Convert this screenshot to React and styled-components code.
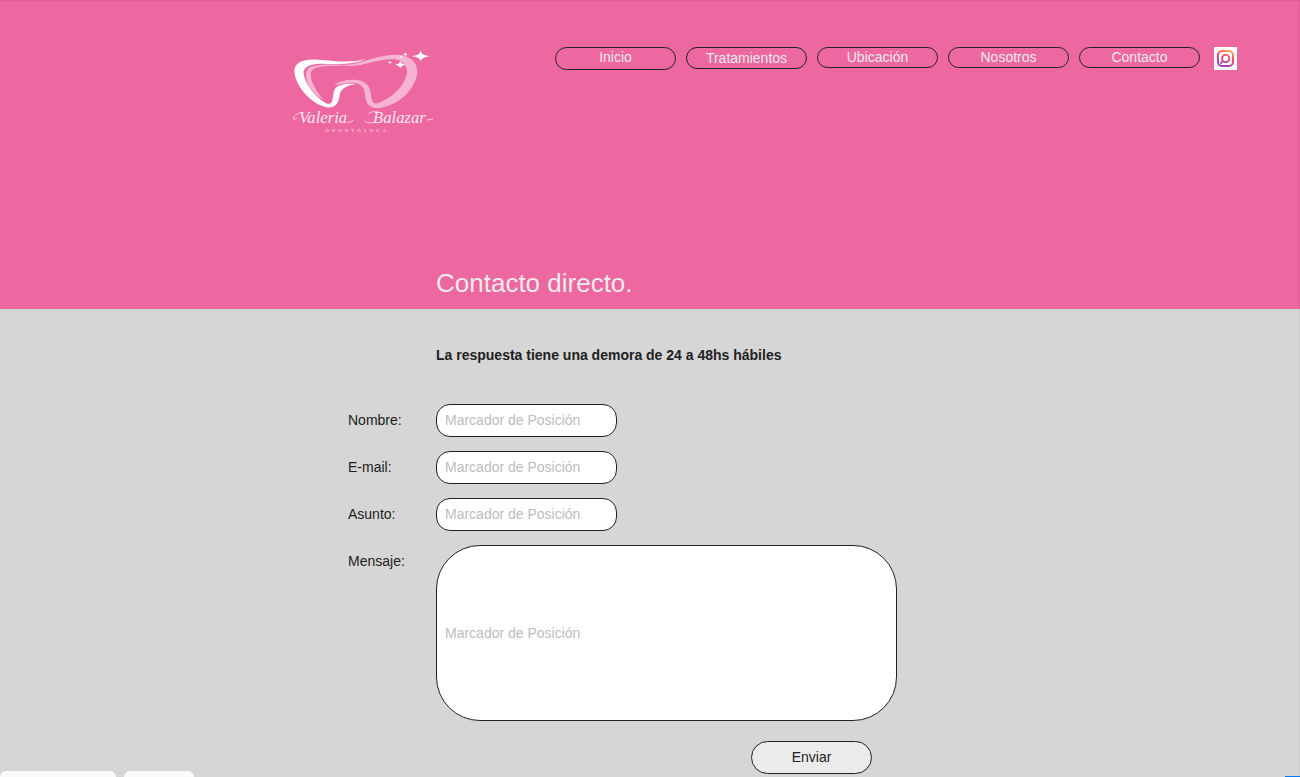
import React from "react";
import styled, { createGlobalStyle } from "styled-components";

const GlobalStyle = createGlobalStyle`
  *, *::before, *::after { box-sizing: border-box; }
  body {
    margin: 0;
    background: #d6d6d6;
    color: #212121;
    font: 14px/20px "Liberation Sans", Arial, sans-serif;
  }
`;

const Page = styled.div`
  display: flex;
  flex-direction: column;
  min-height: 100vh;
  overflow: hidden;
`;

const Hero = styled.header`
  display: flex;
  flex-direction: column;
  justify-content: space-between;
  min-height: 309px;
  padding-top: 39px;
  background: #ed67a1;
  border-top: 1px solid #e05f97;
  border-right: 1px solid #e05f97;
`;

const Main = styled.main`
  flex: 1;
  border-right: 1px solid #cacaca;
`;

const TopBar = styled.div`
  display: flex;
  justify-content: flex-end;
  align-items: flex-start;
  gap: 115px;
  padding-right: 62px;
`;

const LogoLink = styled.a`
  display: block;
  flex: none;
  line-height: 0;
`;

const Nav = styled.nav`
  display: flex;
  align-items: flex-start;
  gap: 10px;
  padding-top: 7px;
`;

const NavLink = styled.a`
  width: 121px;
  height: ${({ $height }) => $height}px;
  border: 1px solid #212121;
  border-radius: 12px;
  color: #ebebeb;
  line-height: ${({ $line }) => $line}px;
  text-align: center;
  text-decoration: none;
`;

const SocialLink = styled.a`
  display: grid;
  place-items: center;
  width: 23px;
  height: 23px;
  margin-left: 4px;
  background: #fff;
`;

const Column = styled.div`
  width: 100%;
  max-width: 1300px;
  margin: 0 auto;
  padding-left: 348px;
`;

const Title = styled.h1`
  margin: 0;
  padding: 0 0 10px 88px;
  color: #ebebeb;
  font-size: 26px;
  font-weight: 400;
  line-height: 32px;
`;

const Notice = styled.p`
  margin: 0;
  padding: 36px 0 39px 88px;
  font-weight: 700;
`;

const Form = styled.form`
  display: grid;
  gap: 14px;
  max-width: 549px;
`;

const Field = styled.div`
  display: grid;
  grid-template-columns: 88px 1fr;
  align-items: start;
`;

const Label = styled.label`
  padding-top: 6px;
`;

const Input = styled.input`
  width: 181px;
  height: 33px;
  padding: 0 8px 2px;
  border: 1px solid #212121;
  border-radius: 14px;
  background: #fff;
  color: #212121;
  font: inherit;
  &::placeholder { color: #bdbdbd; opacity: 1; }
`;

const Message = styled.textarea`
  display: block;
  width: 100%;
  height: 176px;
  padding: 77px 8px;
  border: 1px solid #212121;
  border-radius: 44px;
  background: #fff;
  color: #212121;
  font: inherit;
  resize: none;
  overflow: hidden;
  &::placeholder { color: #bdbdbd; opacity: 1; }
`;

const Submit = styled.button`
  justify-self: end;
  width: 121px;
  height: 33px;
  margin: 6px 25px 3px 0;
  padding: 0 0 2px;
  border: 1px solid #212121;
  border-radius: 17px;
  background: #ebebeb;
  color: #212121;
  font: inherit;
`;

const BottomTabs = styled.div`
  position: fixed;
  left: 0;
  bottom: 0;
  display: flex;
  gap: 8px;
`;

const BottomTab = styled.div`
  width: ${({ $width }) => $width}px;
  height: 6px;
  border-radius: 6px 6px 0 0;
  background: #fafafa;
`;

const BottomAccent = styled.div`
  position: fixed;
  right: 0;
  bottom: 0;
  width: 15px;
  height: 1px;
  background: #0a78f0;
`;

const Logo = () => (
  <svg width="155" height="100" viewBox="0 0 465 300" role="img" aria-label="Valeria Balazar">
    <g fill="#f6b3d3">
      <path d="M155 76 C210 80 270 45 332 44 C375 44 398 66 397 98 C391 143 350 191 288 203 C258 208 243 194 241 170 C239 142 229 129 202 128 C180 128 162 132 147 137 C162 124 188 118 214 120 C245 122 256 141 258 165 C260 188 267 194 283 188 C329 170 365 129 366 94 C366 70 345 57 320 57 C278 58 235 78 198 78 Z" />
      <path d="M200 75 C155 73 112 72 86 78 C58 84 58 112 74 140 C85 158 101 172 117 180 C99 161 78 131 77 105 C76 87 93 82 117 79 C145 77 172 78 200 75 Z" />
    </g>
    <g fill="#fff">
      <path d="M243 57 C202 68 161 65 112 60 C65 54 27 63 28 94 C30 136 75 190 124 202 C153 206 161 188 164 166 C167 147 181 137 212 132 C180 129 153 135 148 151 C141 169 147 192 130 192 C104 184 61 138 56 101 C53 80 78 70 110 71 C160 74 211 73 243 57 Z" />
      <path d="M407 31 Q408 47 435 49 Q409 51 407 65 Q405 51 380 49 Q405 47 407 31 Z" />
      <path d="M346 63 Q348 72 363 74 Q348 76 346 85 Q344 76 330 74 Q344 72 346 63 Z" />
      <path d="M361 37 L363 41 L368 43 L363 45 L361 49 L359 45 L354 43 L359 41 Z" />
      <path d="M315 62 L317 65 L322 67 L317 69 L315 72 L313 69 L308 67 L313 65 Z" />
      <circle cx="349" cy="52" r="3" />
    </g>
    <g fill="none" stroke="#fff" strokeWidth="2" strokeLinecap="round">
      <path d="M50 216 C40 220 27 225 25 236 Q27 241 36 234" />
      <path d="M188 247 Q198 247 205 241" />
      <path d="M251 221 C258 214 268 214 280 216" />
      <path d="M268 247 C257 250 246 249 239 244" />
      <path d="M426 240 Q435 238 443 237" />
    </g>
    <g fill="#fde6f0" fontFamily="'Liberation Serif', serif">
      <text x="42" y="249" fontSize="50" fontStyle="italic">Valeria</text>
      <text x="264" y="249" fontSize="50" fontStyle="italic">Balazar</text>
      <text x="122" y="276" fontSize="13" letterSpacing="10">ODONTÓLOGA</text>
    </g>
  </svg>
);

const InstagramIcon = () => (
  <svg width="19" height="19" viewBox="0 0 19 19" fill="none" aria-hidden="true">
    <defs>
      <linearGradient id="instagram" x1="14" y1="1" x2="7" y2="18" gradientUnits="userSpaceOnUse">
        <stop stopColor="#ffad55" />
        <stop offset="0.45" stopColor="#ef4b73" />
        <stop offset="1" stopColor="#9642c8" />
      </linearGradient>
    </defs>
    <g stroke="url(#instagram)" strokeWidth="2">
      <rect x="2" y="2" width="15" height="15" rx="4" />
      <circle cx="9.7" cy="9.4" r="3.6" />
      <path d="M7 12 L4.5 14.5" />
    </g>
  </svg>
);

const links = [
  { text: "Inicio", height: 23, line: 19 },
  { text: "Tratamientos", height: 22, line: 20 },
  { text: "Ubicación", height: 21, line: 19 },
  { text: "Nosotros", height: 21, line: 19 },
  { text: "Contacto", height: 21, line: 19 },
];

const fields = [
  { id: "nombre", label: "Nombre:", type: "text" },
  { id: "email", label: "E-mail:", type: "email" },
  { id: "asunto", label: "Asunto:", type: "text" },
];

export default function App() {
  return (
    <Page>
      <GlobalStyle />
      <Hero>
        <TopBar>
          <LogoLink href="#inicio"><Logo /></LogoLink>
          <Nav>
            {links.map(({ text, height, line }) => (
              <NavLink key={text} href={`#${text.toLowerCase()}`} $height={height} $line={line}>
                {text}
              </NavLink>
            ))}
            <SocialLink href="#instagram" aria-label="Instagram"><InstagramIcon /></SocialLink>
          </Nav>
        </TopBar>
        <Column><Title>Contacto directo.</Title></Column>
      </Hero>
      <Main>
        <Column>
          <Notice>La respuesta tiene una demora de 24 a 48hs hábiles</Notice>
          <Form onSubmit={(event) => event.preventDefault()}>
            {fields.map(({ id, label, type }) => (
              <Field key={id}>
                <Label htmlFor={id}>{label}</Label>
                <Input id={id} name={id} type={type} placeholder="Marcador de Posición" />
              </Field>
            ))}
            <Field>
              <Label htmlFor="mensaje">Mensaje:</Label>
              <Message id="mensaje" name="mensaje" placeholder="Marcador de Posición" />
            </Field>
            <Submit type="submit">Enviar</Submit>
          </Form>
        </Column>
      </Main>
      <BottomTabs>
        <BottomTab $width={116} />
        <BottomTab $width={70} />
      </BottomTabs>
      <BottomAccent />
    </Page>
  );
}
